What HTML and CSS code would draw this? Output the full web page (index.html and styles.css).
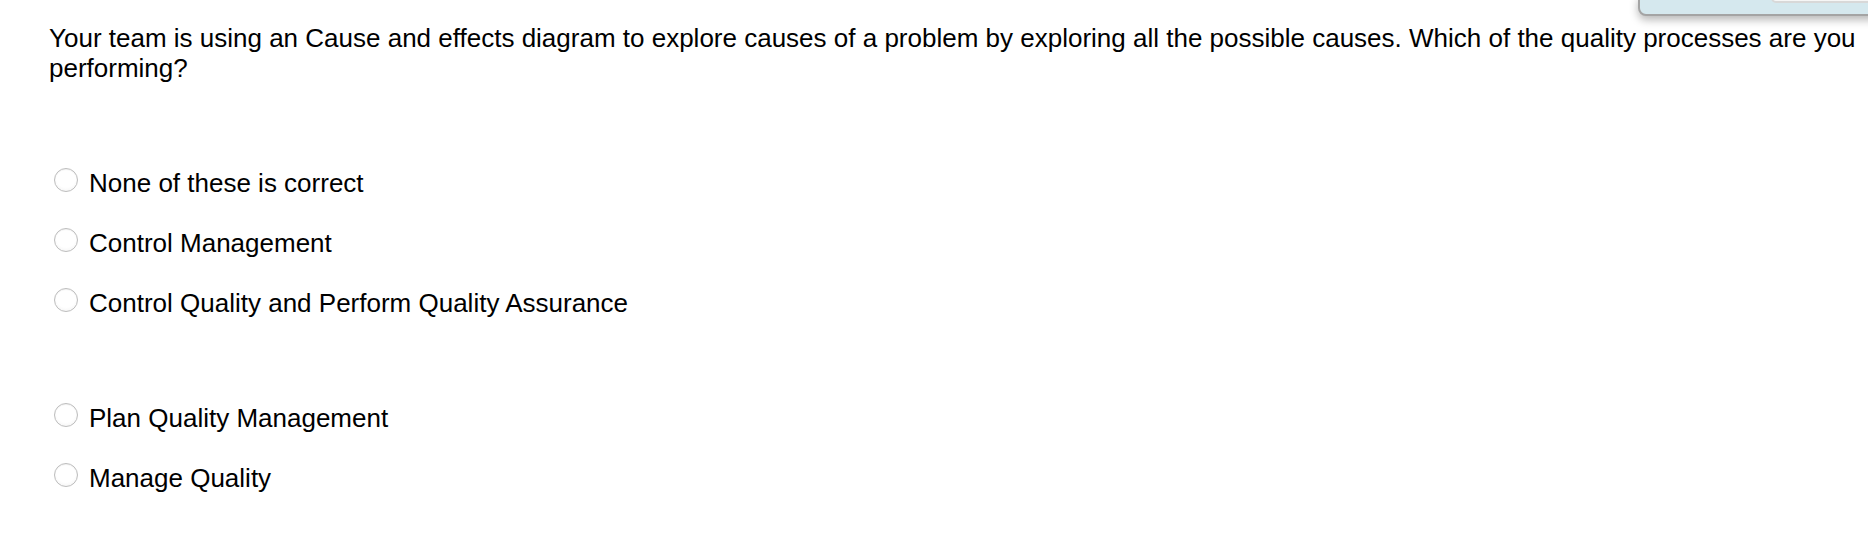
FILE: index.html
```html
<!DOCTYPE html>
<html lang="en">
<head>
<meta charset="utf-8">
<title>Quiz question</title>
<link rel="stylesheet" href="styles.css">
</head>
<body>
<div class="panel"><div class="panel-btn"></div></div>
<main class="question">
  <p class="prompt">Your team is using an Cause and effects diagram to explore causes of a problem by exploring all the possible causes. Which of the quality processes are you performing?</p>
  <div class="answers">
    <label class="option"><input type="radio" name="q"><span class="radio"></span><span class="text">None of these is correct</span></label>
    <label class="option"><input type="radio" name="q"><span class="radio"></span><span class="text">Control Management</span></label>
    <label class="option"><input type="radio" name="q"><span class="radio"></span><span class="text">Control Quality and Perform Quality Assurance</span></label>
    <label class="option option-gap"><input type="radio" name="q"><span class="radio"></span><span class="text">Plan Quality Management</span></label>
    <label class="option"><input type="radio" name="q"><span class="radio"></span><span class="text">Manage Quality</span></label>
  </div>
</main>
</body>
</html>
```
FILE: styles.css
```css
html, body {
  margin: 0;
  padding: 0;
  background: #ffffff;
}
body {
  width: 1868px;
  height: 560px;
  overflow: hidden;
  position: relative;
  font-family: "Liberation Sans", Arial, Helvetica, sans-serif;
  color: #000000;
}
.question {
  padding: 23px 8px 0 49px;
}
.prompt {
  margin: 0;
  font-size: 26px;
  line-height: 30px;
}
.answers {
  display: flex;
  flex-direction: column;
  gap: 30px;
  margin-top: 85px;
  padding-left: 5px;
}
.option {
  display: flex;
  align-items: flex-start;
  gap: 11px;
  font-size: 26px;
  line-height: 30px;
  cursor: pointer;
}
.option-gap {
  margin-top: 55px;
}
.option input {
  display: none;
}
.radio {
  flex: none;
  box-sizing: border-box;
  width: 24px;
  height: 24px;
  border-radius: 50%;
  border: 1px solid #bdbdbd;
  background: radial-gradient(circle at 50% 40%, #ffffff 55%, #eeeeee 100%);
  box-shadow: inset 0 1px 1px rgba(0,0,0,0.06);
}
.panel {
  position: absolute;
  top: -4px;
  left: 1638px;
  right: -10px;
  height: 20px;
  box-sizing: border-box;
  background: #d5e8ee;
  border: 2px solid #a4a4a4;
  border-radius: 0 0 0 8px;
  box-shadow: 0 4px 9px rgba(0,0,0,0.28);
}
.panel-btn {
  position: absolute;
  top: -4px;
  left: 131px;
  right: 0;
  height: 9px;
  box-sizing: border-box;
  background: #f6f6f6;
  border: 2px solid #d8d8d8;
  border-radius: 0 0 0 5px;
}
```
